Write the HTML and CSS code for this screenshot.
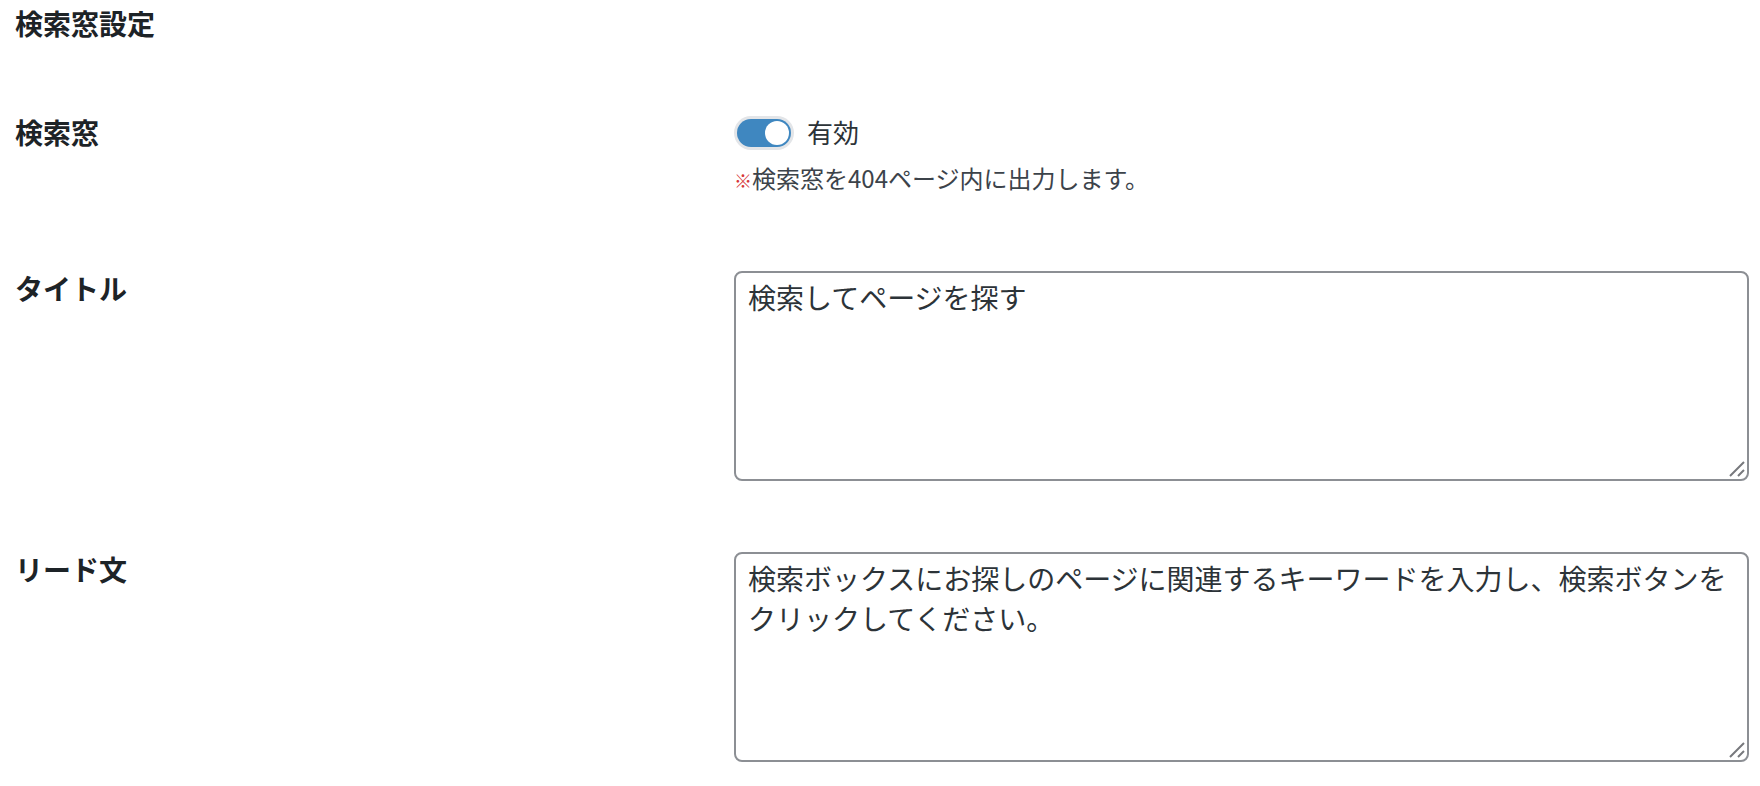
FILE: index.html
```html
<!DOCTYPE html>
<html lang="ja">
<head>
<meta charset="utf-8">
<title>検索窓設定</title>
<link rel="stylesheet" href="styles.css">
</head>
<body>
<div class="page">
  <h2 class="heading">検索窓設定</h2>
  <div class="rows">
    <div class="row row-toggle">
      <div class="label">検索窓</div>
      <div class="field">
        <div class="toggle-line">
          <span class="toggle"><span class="knob"></span></span>
          <span class="toggle-text">有効</span>
        </div>
        <p class="note"><span class="mark">※</span>検索窓を404ページ内に出力します。</p>
      </div>
    </div>
    <div class="row">
      <div class="label">タイトル</div>
      <div class="field">
        <div class="ta-wrap">
          <textarea class="ta">検索してページを探す</textarea>
          <svg class="grip" width="18" height="18" viewBox="0 0 18 18"><path d="M2 16 L16 2 M10 16 L16 10" stroke="#77797d" stroke-width="2" fill="none"/></svg>
        </div>
      </div>
    </div>
    <div class="row">
      <div class="label">リード文</div>
      <div class="field">
        <div class="ta-wrap">
          <textarea class="ta">検索ボックスにお探しのページに関連するキーワードを入力し、検索ボタンをクリックしてください。</textarea>
          <svg class="grip" width="18" height="18" viewBox="0 0 18 18"><path d="M2 16 L16 2 M10 16 L16 10" stroke="#77797d" stroke-width="2" fill="none"/></svg>
        </div>
      </div>
    </div>
  </div>
</div>
</body>
</html>
```
FILE: styles.css
```css
html, body {
  margin: 0;
  padding: 0;
  background: #ffffff;
}
body {
  font-family: "Noto Sans CJK JP", "Noto Sans", sans-serif;
  color: #1d2327;
}
.page {
  padding: 5px 11px 0 15px;
}
.heading {
  margin: 0 0 73px;
  font-size: 28px;
  line-height: 36px;
  font-weight: 700;
  color: #1d2327;
}
.rows {
  display: flex;
  flex-direction: column;
  gap: 70px;
}
.row {
  display: grid;
  grid-template-columns: 719px 1015px;
  align-items: start;
}
.row-toggle {
  padding-bottom: 4px;
}
.label {
  font-size: 28px;
  line-height: 36px;
  font-weight: 700;
  color: #1d2327;
}
.field {
  padding-top: 1px;
}
.toggle-line {
  display: flex;
  align-items: center;
  height: 36px;
  padding-left: 3px;
  gap: 16px;
}
.toggle {
  display: flex;
  justify-content: flex-end;
  align-items: center;
  box-sizing: border-box;
  width: 54px;
  height: 28px;
  padding: 2px;
  border-radius: 14px;
  background: #3f87c0;
  box-shadow: 0 0 0 3px #e3e5e8;
}
.knob {
  width: 24px;
  height: 24px;
  border-radius: 50%;
  background: #ffffff;
}
.toggle-text {
  font-size: 26px;
  line-height: 36px;
  color: #2c3338;
  position: relative;
  top: -1px;
}
.note {
  margin: 9px 0 0;
  height: 36px;
  font-size: 24px;
  line-height: 36px;
  color: #3c434a;
}
.mark {
  font-size: 18px;
  line-height: 1;
  font-weight: 700;
  color: #d63638;
}
.ta-wrap {
  position: relative;
  width: 1015px;
  height: 210px;
}
.ta {
  display: block;
  box-sizing: border-box;
  width: 1015px;
  height: 210px;
  margin: 0;
  padding: 4px 12px;
  border: 2px solid #8c8f94;
  border-radius: 8px;
  font-family: "Noto Sans CJK JP", "Noto Sans", sans-serif;
  font-size: 28px;
  line-height: 40px;
  color: #2c3338;
  background: #ffffff;
  resize: none;
  outline: none;
  overflow: hidden;
}
.grip {
  position: absolute;
  right: 3px;
  bottom: 3px;
}
```
